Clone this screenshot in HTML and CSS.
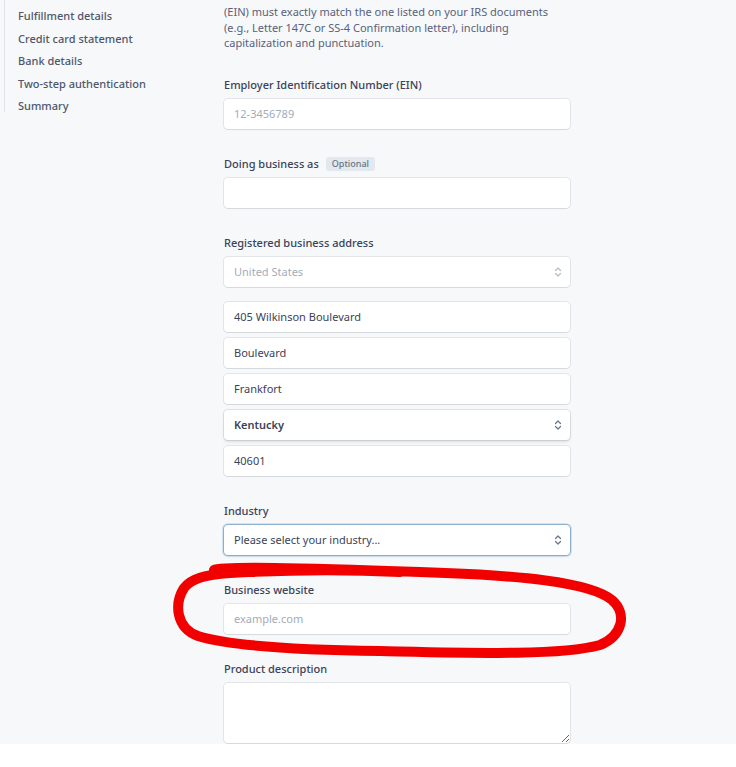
FILE: index.html
```html
<!DOCTYPE html>
<html lang="en">
<head>
  <meta charset="UTF-8">
  <title>Business details</title>
  <link rel="stylesheet" href="styles.css">
</head>
<body>
  <div class="page">
    <nav class="steps">
      <a class="step">Fulfillment details</a>
      <a class="step">Credit card statement</a>
      <a class="step">Bank details</a>
      <a class="step">Two-step authentication</a>
      <a class="step">Summary</a>
    </nav>

    <form class="details">
      <p class="hint">
        (EIN) must exactly match the one listed on your IRS documents<br>
        (e.g., Letter 147C or SS-4 Confirmation letter), including<br>
        capitalization and punctuation.
      </p>

      <div class="field">
        <label for="ein">Employer Identification Number (EIN)</label>
        <input type="text" id="ein" class="input" placeholder="12-3456789">
      </div>

      <div class="field">
        <label for="dba">Doing business as <span class="badge">Optional</span></label>
        <input type="text" id="dba" class="input">
      </div>

      <div class="field">
        <label for="country">Registered business address</label>
        <div class="select is-disabled">
          <span>United States</span>
          <svg class="chevron" viewBox="0 0 8 12" width="8" height="12"><path d="M1.5 4.5 4 2l2.5 2.5M1.5 7.5 4 10l2.5-2.5" fill="none" stroke="currentColor" stroke-width="1.2" stroke-linecap="round" stroke-linejoin="round"/></svg>
        </div>
        <div class="address">
          <input type="text" class="input" value="405 Wilkinson Boulevard">
          <input type="text" class="input" value="Boulevard">
          <input type="text" class="input" value="Frankfort">
          <div class="select is-strong">
            <span>Kentucky</span>
            <svg class="chevron" viewBox="0 0 8 12" width="8" height="12"><path d="M1.5 4.5 4 2l2.5 2.5M1.5 7.5 4 10l2.5-2.5" fill="none" stroke="currentColor" stroke-width="1.2" stroke-linecap="round" stroke-linejoin="round"/></svg>
          </div>
          <input type="text" class="input" value="40601">
        </div>
      </div>

      <div class="field">
        <label>Industry</label>
        <div class="select is-focused">
          <span>Please select your industry...</span>
          <svg class="chevron" viewBox="0 0 8 12" width="8" height="12"><path d="M1.5 4.5 4 2l2.5 2.5M1.5 7.5 4 10l2.5-2.5" fill="none" stroke="currentColor" stroke-width="1.2" stroke-linecap="round" stroke-linejoin="round"/></svg>
        </div>
      </div>

      <div class="field">
        <label for="website">Business website</label>
        <input type="text" id="website" class="input" placeholder="example.com">
      </div>

      <div class="field">
        <label for="product">Product description</label>
        <textarea id="product" class="input textarea"></textarea>
      </div>
    </form>
  </div>

  <!-- hand-drawn highlight over the website field -->
  <svg class="scribble" width="736" height="767" viewBox="0 0 736 767">
    <path d="M214 570 C 222 566, 300 568, 420 572 C 520 575, 590 582, 612 600 C 628 614, 622 636, 600 645 C 560 656, 470 653, 380 651 C 300 650, 230 646, 198 636 C 176 628, 174 604, 184 588 C 192 578, 205 575, 230 573 C 300 569, 360 570, 400 572"
      fill="none" stroke="#f20000" stroke-width="10" stroke-linecap="round" stroke-linejoin="round"/>
  </svg>
</body>
</html>
```

FILE: styles.css
```css
body {
  margin: 0;
  background: #fff;
  font-family: "Noto Sans", "Open Sans", Arial, sans-serif;
  color: #3c4257;
}
.page {
  display: grid;
  grid-template-columns: 224px 346px;
  align-items: start;
  padding-bottom: 1px;
  background: #f6f8fa;
}
.steps {
  display: flex;
  flex-direction: column;
  box-sizing: border-box;
  height: 112px;
  margin-left: 4px;
  padding: 5px 0 0 13px;
  border-left: 1px solid #e1e5ea;
}
.step {
  font-size: 11px;
  line-height: 22.5px;
  font-weight: 500;
  color: #4f566b;
}
.hint {
  margin: 4px 0 0;
  font-size: 11px;
  line-height: 15.5px;
  color: #59617a;
}
.field {
  display: flex;
  flex-direction: column;
  margin-top: 27px;
}
.field:first-of-type {
  margin-top: 26px;
}
.field label {
  display: flex;
  align-items: center;
  gap: 7px;
  height: 16px;
  margin-bottom: 6px;
  font-size: 11px;
  font-weight: 500;
  color: #3c4257;
}
.badge {
  padding: 0 6px;
  border-radius: 3px;
  background: #e3e8ee;
  font-size: 9px;
  line-height: 14px;
  color: #697386;
}
.input,
.select {
  box-sizing: border-box;
  height: 30px;
  width: 100%;
  margin: 0;
  padding: 0 10px;
  border: 0;
  border-radius: 4px;
  background: #fff;
  box-shadow: 0 0 0 1px rgba(60, 66, 87, 0.1), 0 1px 1px rgba(0, 0, 0, 0.06);
  font: inherit;
  font-size: 11px;
  color: #3c4257;
  outline: none;
}
.input::placeholder {
  color: #a3acb9;
}
.select {
  display: flex;
  align-items: center;
  justify-content: space-between;
  padding-right: 8px;
}
.chevron {
  color: #697386;
}
.select.is-disabled span {
  color: #a3acb9;
}
.select.is-disabled .chevron {
  color: #b5bdc8;
}
.select.is-strong {
  font-weight: 600;
  box-shadow: 0 0 0 1px rgba(60, 66, 87, 0.12), 0 2px 3px rgba(0, 0, 0, 0.1);
}
.select.is-focused {
  box-shadow: 0 0 0 1px rgba(88, 140, 180, 0.55), 0 0 0 2px rgba(150, 190, 220, 0.35), 0 1px 3px rgba(0, 0, 0, 0.12);
}
.address {
  display: flex;
  flex-direction: column;
  gap: 6px;
  margin-top: 15px;
}
.textarea {
  display: block;
  height: 60px;
  padding: 6px 10px;
  resize: vertical;
}
.scribble {
  position: absolute;
  top: 0;
  left: 0;
  pointer-events: none;
}
```
